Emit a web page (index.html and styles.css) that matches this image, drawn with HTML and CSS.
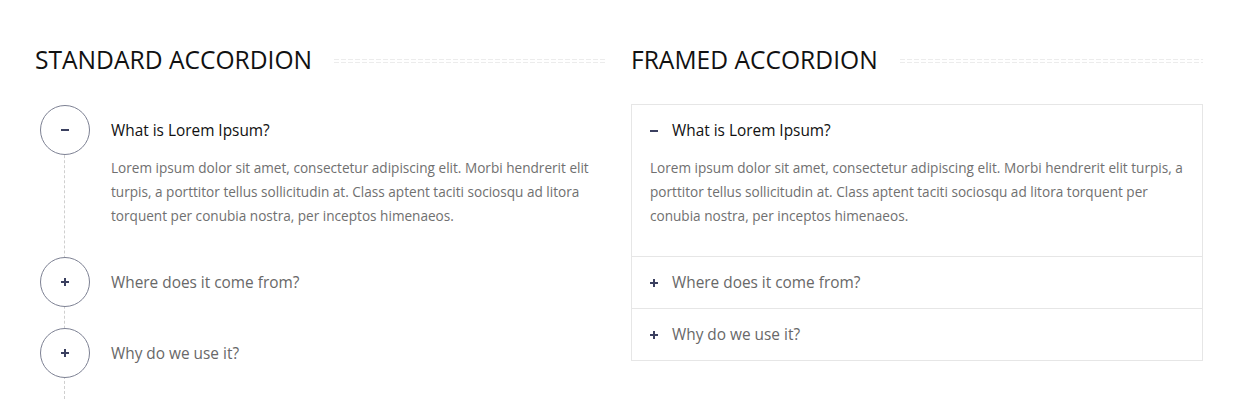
FILE: index.html
```html
<!DOCTYPE html>
<html lang="en">
<head>
<meta charset="utf-8">
<title>Accordions</title>
<link rel="stylesheet" href="styles.css">
</head>
<body>
<div class="page">
  <section class="col">
    <div class="heading"><h2>STANDARD ACCORDION</h2><span class="sep"></span></div>
    <div class="std">
      <div class="std-item open">
        <div class="std-head">
          <span class="circle"><svg width="8" height="8" viewBox="0 0 8 8"><rect x="0" y="3" width="8" height="2" fill="#3b4060"/></svg></span>
          <span class="std-title">What is Lorem Ipsum?</span>
        </div>
        <div class="std-body">Lorem ipsum dolor sit amet, consectetur adipiscing elit. Morbi hendrerit elit turpis, a porttitor tellus sollicitudin at. Class aptent taciti sociosqu ad litora torquent per conubia nostra, per inceptos himenaeos.</div>
      </div>
      <div class="std-item">
        <div class="std-head">
          <span class="circle"><svg width="8" height="8" viewBox="0 0 8 8"><rect x="0" y="3" width="8" height="2" fill="#3b4060"/><rect x="3" y="0" width="2" height="8" fill="#3b4060"/></svg></span>
          <span class="std-title">Where does it come from?</span>
        </div>
      </div>
      <div class="std-item">
        <div class="std-head">
          <span class="circle"><svg width="8" height="8" viewBox="0 0 8 8"><rect x="0" y="3" width="8" height="2" fill="#3b4060"/><rect x="3" y="0" width="2" height="8" fill="#3b4060"/></svg></span>
          <span class="std-title">Why do we use it?</span>
        </div>
      </div>
    </div>
  </section>
  <section class="col">
    <div class="heading heading-r"><h2>FRAMED ACCORDION</h2><span class="sep"></span></div>
    <div class="framed">
      <div class="fr-item open">
        <div class="fr-head">
          <svg class="fr-icon" width="8" height="8" viewBox="0 0 8 8"><rect x="0" y="3" width="8" height="2" fill="#3b4060"/></svg>
          <span class="fr-title">What is Lorem Ipsum?</span>
        </div>
        <div class="fr-body">Lorem ipsum dolor sit amet, consectetur adipiscing elit. Morbi hendrerit elit turpis, a porttitor tellus sollicitudin at. Class aptent taciti sociosqu ad litora torquent per conubia nostra, per inceptos himenaeos.</div>
      </div>
      <div class="fr-item">
        <div class="fr-head">
          <svg class="fr-icon" width="8" height="8" viewBox="0 0 8 8"><rect x="0" y="3" width="8" height="2" fill="#3b4060"/><rect x="3" y="0" width="2" height="8" fill="#3b4060"/></svg>
          <span class="fr-title">Where does it come from?</span>
        </div>
      </div>
      <div class="fr-item">
        <div class="fr-head">
          <svg class="fr-icon" width="8" height="8" viewBox="0 0 8 8"><rect x="0" y="3" width="8" height="2" fill="#3b4060"/><rect x="3" y="0" width="2" height="8" fill="#3b4060"/></svg>
          <span class="fr-title">Why do we use it?</span>
        </div>
      </div>
    </div>
  </section>
</div>
</body>
</html>
```
FILE: styles.css
```css
html, body {
  margin: 0;
  background: #fff;
}
body {
  font-family: "Open Sans", "Liberation Sans", sans-serif;
  color: #6f6f6f;
  overflow: hidden;
}
.page {
  display: grid;
  grid-template-columns: 572px 572px;
  column-gap: 24px;
  padding: 45px 0 0 35px;
}
.heading {
  display: flex;
  align-items: center;
  gap: 22px;
  height: 30px;
  margin-bottom: 30px;
}
.heading-r {
  margin-bottom: 29px;
}
.heading h2 {
  margin: 0;
  font-size: 24.6px;
  font-weight: 400;
  color: #111;
  white-space: nowrap;
  line-height: 30px;
}
.sep {
  flex: 1;
  height: 4px;
  margin-top: 1px;
  background-image:
    linear-gradient(90deg, #ececec 5px, transparent 5px),
    linear-gradient(90deg, #ececec 5px, transparent 5px);
  background-size: 7px 1px, 7px 1px;
  background-position: 0 0, 0 3px;
  background-repeat: repeat-x;
}

/* standard accordion */
.std {
  position: relative;
  display: flex;
  flex-direction: column;
  gap: 21px;
  padding: 0 0 21px 5px;
}
.std::before {
  content: "";
  position: absolute;
  left: 29px;
  top: 0;
  bottom: 0;
  border-left: 1px dashed #cfcfcf;
}
.std-head {
  display: flex;
  align-items: center;
  gap: 21px;
}
.circle {
  position: relative;
  z-index: 1;
  box-sizing: border-box;
  width: 50px;
  height: 50px;
  flex: none;
  border: 1px solid #7d8193;
  border-radius: 50%;
  background: #fff;
  display: flex;
  align-items: center;
  justify-content: center;
}
.std-title, .fr-title {
  font-size: 15.4px;
  color: #686868;
}
.open .std-title, .open .fr-title {
  color: #111;
}
.std-body {
  padding: 1px 0 8px 71px;
  font-size: 13.6px;
  line-height: 24px;
  color: #707070;
}

/* framed accordion */
.framed {
  border: 1px solid #e6e6e6;
}
.fr-item + .fr-item {
  border-top: 1px solid #e6e6e6;
}
.fr-head {
  display: flex;
  align-items: center;
  gap: 14px;
  height: 51px;
  padding: 0 18px;
}
.fr-icon {
  flex: none;
}
.fr-body {
  padding: 0 10px 28px 18px;
  font-size: 13.6px;
  line-height: 24px;
  color: #707070;
}
```
